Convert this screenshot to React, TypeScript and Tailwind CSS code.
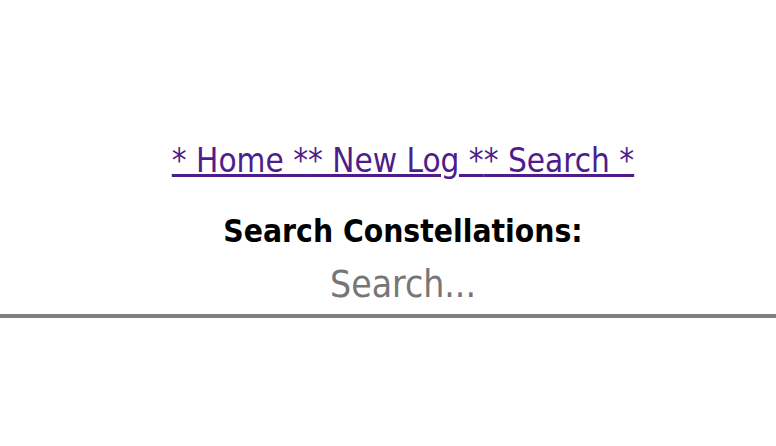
export default function App() {
  return (
    <div className="min-h-[446px] w-full overflow-hidden bg-white">
      <div className="flex w-[806px] flex-col items-center pt-[140px] font-['DejaVu_Sans_Condensed','DejaVu_Sans',sans-serif]">
        <nav className="text-[33px] leading-[42px] text-[#4f1d8b]">
          <a href="#" className="underline">* Home *</a>
          <a href="#" className="underline">* New Log *</a>
          <a href="#" className="underline">* Search *</a>
        </nav>
        <h2 className="mt-[30px] text-[31.5px] font-bold leading-[38px] text-black">
          Search Constellations:
        </h2>
        <input
          type="text"
          placeholder="Search..."
          className="mt-[4px] h-[64px] w-full border-b-4 border-[#808080] bg-transparent text-center text-[37px] text-black outline-none placeholder:text-[#767676]"
        />
      </div>
    </div>
  );
}
